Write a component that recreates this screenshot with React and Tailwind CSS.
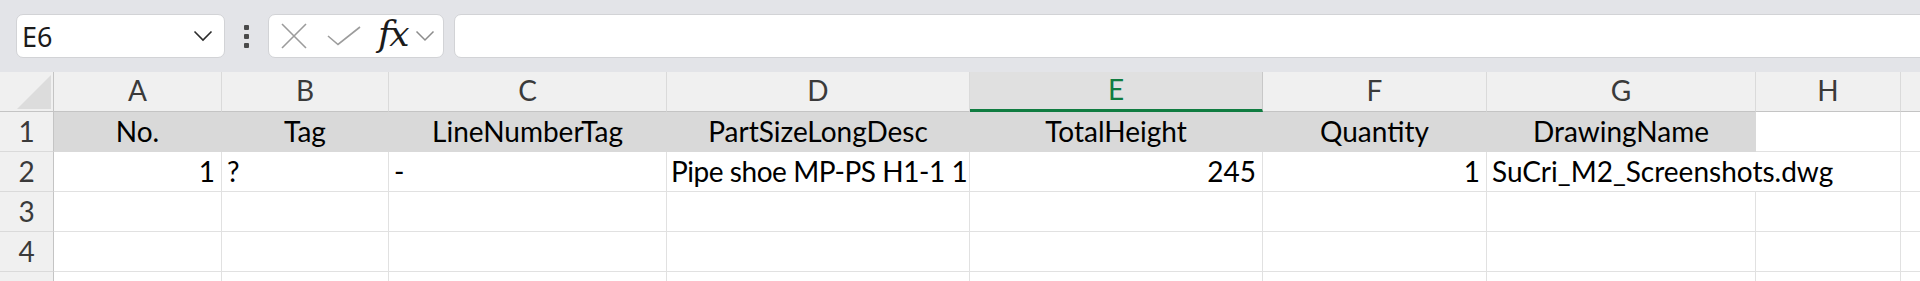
import React from "react";

// column widths incl. right border (row header first)
const columns = [
  { key: "A", w: "w-[168px]" },
  { key: "B", w: "w-[167px]" },
  { key: "C", w: "w-[278px]" },
  { key: "D", w: "w-[303px]" },
  { key: "E", w: "w-[293px]", active: true },
  { key: "F", w: "w-[224px]" },
  { key: "G", w: "w-[269px]" },
  { key: "H", w: "w-[145px]" },
  { key: "", w: "w-[120px]" }, // column I, label is off screen
];

const headerRow = ["No.", "Tag", "LineNumberTag", "PartSizeLongDesc", "TotalHeight", "Quantity", "DrawingName"];

const Toolbar = () => (
  <div className="h-[72px] bg-[#e3e4e8] flex items-center pl-4">
    {/* Name box */}
    <div className="w-[209px] h-[44px] shrink-0 rounded-[7px] bg-white border border-[#d2d3d6] flex items-center justify-between pl-[5px] pr-[11px]">
      <span className="text-[27px] leading-none text-[#1b1b1b] font-['Noto_Sans',sans-serif]">E6</span>
      <svg width="20" height="12" viewBox="0 0 20 12" fill="none">
        <path d="M1.5 1.5 L10 10 L18.5 1.5" stroke="#2b2b2b" strokeWidth="1.6" />
      </svg>
    </div>

    {/* more handle */}
    <div className="w-[43px] shrink-0 flex flex-col items-center gap-[4px]">
      <span className="w-[5px] h-[5px] bg-[#4a4a4a] rounded-[1px]" />
      <span className="w-[5px] h-[5px] bg-[#4a4a4a] rounded-[1px]" />
      <span className="w-[5px] h-[5px] bg-[#4a4a4a] rounded-[1px]" />
    </div>

    {/* cancel / enter / fx */}
    <div className="w-[176px] h-[44px] shrink-0 rounded-[7px] bg-white border border-[#d2d3d6] flex items-center pl-[12px]">
      <svg width="26" height="26" viewBox="0 0 26 26" fill="none">
        <path d="M1 1 L25 25 M25 1 L1 25" stroke="#9c9c9c" strokeWidth="1.6" />
      </svg>
      <svg width="34" height="20" viewBox="0 0 34 20" fill="none" className="ml-[20px]">
        <path d="M1 10 L11 18.5 L33 1" stroke="#9c9c9c" strokeWidth="1.6" />
      </svg>
      <span className="ml-[17px] text-[36px] leading-none italic text-[#1b1b1b] font-['DejaVu_Serif',serif] tracking-[-2px] -mt-[4px]">fx</span>
      <svg width="20" height="12" viewBox="0 0 20 12" fill="none" className="ml-[7px]">
        <path d="M1.5 1.5 L10 10 L18.5 1.5" stroke="#8c8c8c" strokeWidth="1.5" />
      </svg>
    </div>

    {/* formula bar */}
    <div className="ml-[10px] w-[1500px] h-[44px] shrink-0 rounded-[7px] bg-white border border-[#d2d3d6]" />
  </div>
);

const ColumnHeaders = () => (
  <div className="flex h-[40px] bg-[#f0f0f0]">
    <div className="w-[54px] shrink-0 border-r border-b border-[#c4c4c4] relative">
      <svg width="34" height="34" viewBox="0 0 34 34" className="absolute right-[2px] bottom-[2px]">
        <polygon points="34,0 34,34 0,34" fill="#dcdcdc" />
      </svg>
    </div>
    {columns.map((c, i) =>
      c.active ? (
        <div
          key={i}
          className={`${c.w} shrink-0 bg-[#e0e0e0] border-r border-r-[#c8c8c8] border-b-[3px] border-b-[#107c41] text-center leading-[35px] text-[28px] text-[#107c41]`}
        >
          {c.key}
        </div>
      ) : (
        <div
          key={i}
          className={`${c.w} shrink-0 border-r border-r-[#dadada] border-b border-b-[#c4c4c4] text-center leading-[36px] text-[28px] text-[#3a3a3a]`}
        >
          {c.key}
        </div>
      )
    )}
  </div>
);

const RowHeader = ({ n }) => (
  <div className="w-[54px] shrink-0 bg-[#f0f0f0] border-r border-r-[#c4c4c4] border-b border-b-[#dadada] text-center leading-[39px] text-[28px] text-[#3a3a3a]">
    {n}
  </div>
);

const Cell = ({ w, children, align = "left", extra = "" }) => (
  <div
    className={`${w} shrink-0 border-r border-b border-[#e1e1e1] leading-[39px] text-[28px] text-black whitespace-nowrap overflow-hidden ${
      align === "right" ? "text-right pr-[6px]" : "text-left pl-[5px]"
    } ${extra}`}
  >
    {children}
  </div>
);

const Sheet = () => (
  <div className="font-['Lato',sans-serif]">
    <ColumnHeaders />

    {/* Row 1 - shaded header cells */}
    <div className="flex h-[40px]">
      <RowHeader n={1} />
      {headerRow.map((t, i) => (
        <div
          key={t}
          className={`${columns[i].w} shrink-0 bg-[#d9d9d9] border-r border-b border-[#d9d9d9] text-center leading-[39px] text-[28px] text-black`}
        >
          {t}
        </div>
      ))}
      <Cell w="w-[145px]" />
      <Cell w="w-[120px]" />
    </div>

    {/* Row 2 - data */}
    <div className="flex h-[40px]">
      <RowHeader n={2} />
      <Cell w="w-[168px]" align="right">1</Cell>
      <Cell w="w-[167px]">?</Cell>
      <Cell w="w-[278px]">-</Cell>
      <Cell w="w-[303px]" extra="!pl-[4px] tracking-[-0.45px]">Pipe shoe MP-PS H1-1 1</Cell>
      <Cell w="w-[293px]" align="right">245</Cell>
      <Cell w="w-[224px]" align="right">1</Cell>
      <Cell w="w-[414px]">SuCri_M2_Screenshots.dwg</Cell>
      <Cell w="w-[120px]" />
    </div>

    {[3, 4, null].map((n, r) => (
      <div key={r} className="flex h-[40px]">
        <RowHeader n={n} />
        {columns.map((c, i) => (
          <Cell key={i} w={c.w} />
        ))}
      </div>
    ))}
  </div>
);

export default function App() {
  return (
    <div className="w-[1920px] h-[281px] overflow-hidden bg-white">
      <Toolbar />
      <Sheet />
    </div>
  );
}
